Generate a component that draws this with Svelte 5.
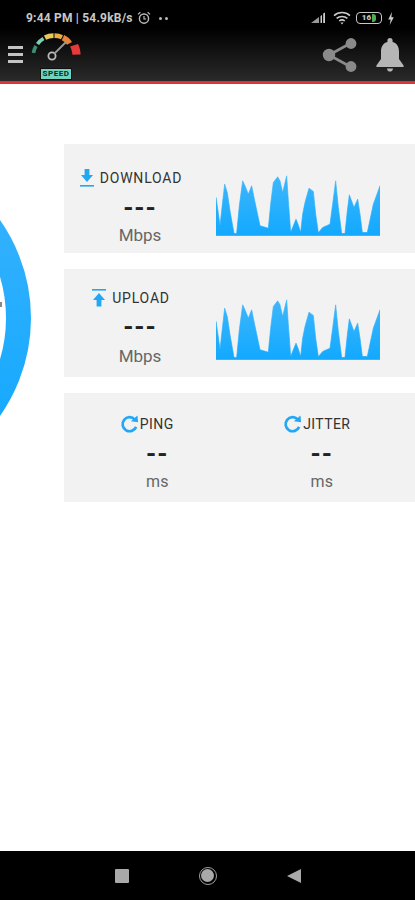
<script lang="ts">
	const chart =
		'M18 80L24 120L30 165L36 110L44 40L52 66L60 120L72 188L80 188L88 105L98 30L105 45L115 70L125 45L132 80L150 165L175 172L182 100L190 35L203 18L210 30L218 65L230 15L235 90L242 185L250 165L258 145L264 160L272 185L278 130L285 95L297 52L310 62L317 130L325 186L338 170L360 160L368 100L377 30L385 110L395 188L405 188L412 120L418 72L432 110L443 85L450 130L457 185L472 185L490 100L510 45L510 194L18 194Z';
	const pairs = [
		{ name: 'PING', unit: 'ms' },
		{ name: 'JITTER', unit: 'ms' }
	];
</script>

{#snippet graph(id)}
	<svg class="graph" viewBox="18 10 492 185" aria-hidden="true">
		<defs>
			<linearGradient {id} x1="0" y1="0" x2="0" y2="1">
				<stop offset="0" stop-color="#3fb6fb" />
				<stop offset="1" stop-color="#12a9ff" />
			</linearGradient>
		</defs>
		<path d={chart} fill="url(#{id})" stroke="url(#{id})" stroke-width="2" stroke-linejoin="round" />
	</svg>
{/snippet}

{#snippet reload()}
	<svg class="reload" viewBox="0 0 20 20" aria-hidden="true">
		<path d="M15.5 4.6A7.4 7.4 0 1 0 17 12.5" fill="none" stroke="#22a7f5" stroke-width="2.8" />
		<path d="M11.5 6.6L19 7.6L18.4 0.6Z" fill="#22a7f5" />
	</svg>
{/snippet}

<div class="page">
	<header class="top">
		<div class="status">
			<span class="status-text">9:44 PM | 54.9kB/s</span>
			<svg class="alarm" viewBox="0 0 14 14" aria-hidden="true">
				<circle cx="7" cy="7.6" r="4.6" fill="none" stroke="#bbb" stroke-width="1.4" />
				<path d="M7 5v3h2.2M1 3.4L3.4 1.2M13 3.4L10.6 1.2" fill="none" stroke="#bbb" stroke-width="1.2" />
			</svg>
			<span class="dots"><i></i><i></i></span>
			<span class="status-right">
				<svg class="signal" viewBox="0 0 16 12" aria-hidden="true">
					<path d="M1 11L9 5V11Z" fill="#999" />
					<path d="M10.5 4L12 3V11H10.5ZM13.2 1.6L15 0.6V11H13.2Z" fill="#ccc" />
				</svg>
				<svg class="wifi" viewBox="0 0 18 14" aria-hidden="true">
					<path d="M1 4.6C5.5 0.6 12.5 0.6 17 4.6M3.6 7.4C6.6 4.8 11.4 4.8 14.4 7.4M6.2 10C7.8 8.7 10.2 8.7 11.8 10" fill="none" stroke="#ccc" stroke-width="1.5" />
					<path d="M7.4 11.4L9 13.4L10.6 11.4Z" fill="#ccc" />
				</svg>
				<span class="battery"><b>16</b><i></i></span>
				<svg class="bolt" viewBox="0 0 8 14" aria-hidden="true">
					<path d="M5 0L1 8H3.6L2.6 14L7 5.6H4.4Z" fill="#ccc" />
				</svg>
			</span>
		</div>
		<div class="toolbar">
			<div class="burger"><i></i><i></i><i></i></div>
			<div class="logo">
				<svg viewBox="0 0 50 36" aria-hidden="true">
					<path d="M2.5 22C3 19 3.8 17 5 15" fill="none" stroke="#3b8f78" stroke-width="3.6" />
					<path d="M6.5 13C8 10.6 10 9 12.5 7.5" fill="none" stroke="#7fd0b0" stroke-width="3.6" />
					<path d="M14 6.6C17 5 20 4.6 22.5 4.6" fill="none" stroke="#e6c95a" stroke-width="4.6" />
					<path d="M23.5 4.6C26 4.6 29 5.2 31 6.2" fill="none" stroke="#e9ae45" stroke-width="4.6" />
					<path d="M32 6.6C35 8 37 9.6 38.5 12.4" fill="none" stroke="#e8833a" stroke-width="5.6" />
					<path d="M39 15.6L47 13C48.6 16 49.4 19.4 49.6 23.4L41.4 23.8C41.2 20.8 40.4 18 39 15.6Z" fill="#e53a3a" />
					<circle cx="21" cy="25" r="3.6" fill="none" stroke="#bbb" stroke-width="1.8" />
					<path d="M23 23L35 11" stroke="#999" stroke-width="1.8" />
				</svg>
				<span class="badge">SPEED</span>
			</div>
			<svg class="share" viewBox="0 0 36 36" aria-hidden="true">
				<path d="M7 18L29 6M7 18L29 30" stroke="#8a8a8a" stroke-width="2.6" />
				<circle cx="7" cy="18" r="6.2" fill="#8a8a8a" />
				<circle cx="29" cy="6.5" r="5.4" fill="#8a8a8a" />
				<circle cx="29" cy="29.5" r="5.4" fill="#8a8a8a" />
			</svg>
			<svg class="bell" viewBox="0 0 28 34" aria-hidden="true">
				<path d="M14 0C15.6 0 16.6 1 16.6 2.6V4C21 5.2 23 8.8 23 13.6V21L27.6 27.4V29H0.4V27.4L5 21V13.6C5 8.8 7 5.2 11.4 4V2.6C11.4 1 12.4 0 14 0Z" fill="#b5b5b5" />
				<path d="M11 30.5H17C17 32.4 15.6 33.6 14 33.6C12.4 33.6 11 32.4 11 30.5Z" fill="#b5b5b5" />
			</svg>
		</div>
	</header>

	<main class="content">
		<div class="gauge">
			<svg viewBox="0 0 64 220" aria-hidden="true">
				<defs>
					<linearGradient id="ring" x1="0" y1="0" x2="0" y2="1">
						<stop offset="0" stop-color="#3ab3fc" />
						<stop offset="1" stop-color="#0fa7ff" />
					</linearGradient>
				</defs>
				<circle cx="-139" cy="110" r="157.5" fill="none" stroke="url(#ring)" stroke-width="25" />
				<rect x="0" y="94" width="2" height="5" fill="#888" />
			</svg>
		</div>
		<div class="cards">
			<section class="card">
				<div class="reading">
					<div class="label">
						<svg class="arrow" viewBox="0 0 14 20" aria-hidden="true">
							<path d="M4.6 1H9.4V7H13L7 14L1 7H4.6Z" fill="#22a7f5" />
							<rect x="0" y="17" width="14" height="1.6" fill="#22a7f5" />
						</svg>
						DOWNLOAD
					</div>
					<div class="dash">---</div>
					<div class="unit">Mbps</div>
				</div>
				{@render graph('dl')}
			</section>
			<section class="card upload">
				<div class="reading">
					<div class="label">
						<svg class="arrow" viewBox="0 0 14 20" aria-hidden="true">
							<rect x="0" y="1" width="14" height="1.6" fill="#22a7f5" />
							<path d="M7 5L13 12H9.4V18.6H4.6V12H1Z" fill="#22a7f5" />
						</svg>
						UPLOAD
					</div>
					<div class="dash">---</div>
					<div class="unit">Mbps</div>
				</div>
				{@render graph('ul')}
			</section>
			<section class="card pair">
				{#each pairs as item}
					<div class="half">
						<div class="label thin">
							{@render reload()}
							{item.name}
						</div>
						<div class="dash">--</div>
						<div class="unit small">{item.unit}</div>
					</div>
				{/each}
			</section>
		</div>
	</main>

	<footer class="nav">
		<span class="square"></span>
		<span class="home"><i></i></span>
		<span class="back"></span>
	</footer>
</div>

<style>
	:global(body) {
		margin: 0;
		background: #fff;
	}

	.page {
		display: flex;
		flex-direction: column;
		height: 900px;
		overflow: hidden;
		font-family: Roboto, 'Liberation Sans', sans-serif;
	}

	.top {
		box-sizing: border-box;
		background: linear-gradient(#000 0, #000 28px, #2a2a2a 100%);
		border-bottom: 3px solid #e0323a;
		height: 84px;
		flex-shrink: 0;
	}

	.status {
		display: flex;
		align-items: center;
		height: 36px;
		padding: 0 0 0 26px;
		color: #c8c8c8;
		font-size: 12px;
		font-weight: 700;
	}

	.status-text {
		white-space: nowrap;
		letter-spacing: 0.2px;
	}

	.alarm {
		width: 14px;
		height: 14px;
		margin-left: 4px;
	}

	.dots {
		display: flex;
		gap: 3px;
		margin-left: 8px;
	}

	.dots i {
		width: 3px;
		height: 3px;
		background: #bbb;
		border-radius: 50%;
	}

	.status-right {
		display: flex;
		align-items: center;
		margin-left: auto;
		margin-right: 20px;
	}

	.signal {
		width: 16px;
		height: 12px;
	}

	.wifi {
		width: 18px;
		height: 14px;
		margin-left: 7px;
	}

	.battery {
		display: flex;
		align-items: center;
		justify-content: center;
		width: 24px;
		height: 10px;
		margin-left: 5px;
		border: 1.2px solid #c8c8c8;
		border-radius: 4px;
		font-size: 8px;
		line-height: 1;
	}

	.battery b {
		margin-right: 1px;
	}

	.battery i {
		width: 4px;
		height: 8px;
		background: #4caf50;
		border-radius: 0 3px 3px 0;
	}

	.bolt {
		width: 8px;
		height: 13px;
		margin-left: 5px;
	}

	.toolbar {
		display: flex;
		align-items: flex-start;
		height: 45px;
		padding-left: 8px;
	}

	.burger {
		display: flex;
		flex-direction: column;
		gap: 4px;
		width: 15px;
		margin-top: 10px;
	}

	.burger i {
		height: 3px;
		background: #c4c4c4;
	}

	.logo {
		display: flex;
		flex-direction: column;
		align-items: center;
		width: 50px;
		margin: -5px 0 0 8px;
	}

	.logo svg {
		width: 50px;
		height: 36px;
	}

	.badge {
		margin-top: 1px;
		padding: 0 2px;
		background: #6fd3bd;
		color: #0b2a24;
		border: 1px solid #111;
		font-size: 8px;
		font-weight: 700;
		line-height: 10px;
		letter-spacing: 0.5px;
	}

	.share {
		width: 36px;
		height: 36px;
		margin: 1px 0 0 auto;
	}

	.bell {
		width: 28px;
		height: 34px;
		margin: 2px 11px 0 18px;
	}

	.content {
		flex: 1;
		display: flex;
		min-height: 0;
	}

	.gauge {
		width: 64px;
		flex-shrink: 0;
		padding-top: 124px;
	}

	.gauge svg {
		display: block;
		width: 64px;
		height: 220px;
	}

	.cards {
		flex: 1;
		display: flex;
		flex-direction: column;
		gap: 16px;
		padding-top: 60px;
	}

	.card {
		display: flex;
		background: #f2f2f2;
		height: 109px;
		box-sizing: border-box;
		padding-right: 35px;
	}

	.upload {
		height: 108px;
	}

	.reading {
		width: 152px;
		flex-shrink: 0;
		padding-top: 24px;
		text-align: center;
	}

	.upload .reading {
		padding-top: 19px;
	}

	.label {
		display: flex;
		align-items: center;
		justify-content: center;
		height: 20px;
		gap: 6px;
		padding-right: 18px;
		color: #333;
		font-size: 14px;
		letter-spacing: 0.8px;
		white-space: nowrap;
	}

	.arrow {
		width: 14px;
		height: 20px;
	}

	.dash {
		height: 24px;
		margin-top: 8px;
		color: #222;
		font-size: 26px;
		font-weight: 700;
		line-height: 24px;
		letter-spacing: 1px;
	}

	.unit {
		margin-top: 4px;
		color: #666;
		font-size: 17px;
		line-height: 22px;
	}

	.upload .dash {
		margin-top: 7px;
	}

	.upload .unit {
		margin-top: 6px;
	}

	.graph {
		width: 164px;
		height: 62px;
		margin-top: 30px;
		flex-shrink: 0;
	}

	.upload .graph {
		margin-top: 29px;
	}

	.pair {
		padding: 21px 11px 0;
	}

	.half {
		flex: 1;
		text-align: center;
	}

	.thin {
		gap: 1px;
		padding-right: 21px;
		letter-spacing: 0.4px;
	}

	.half:last-child .thin {
		padding-right: 10px;
	}

	.reload {
		width: 19px;
		height: 19px;
	}

	.small {
		margin-top: 5px;
		font-size: 16px;
	}

	.nav {
		flex-shrink: 0;
		display: flex;
		align-items: center;
		justify-content: center;
		gap: 70px;
		height: 49px;
		background: #000;
	}

	.square {
		width: 14px;
		height: 14px;
		background: #a9a9a9;
		border-radius: 1px;
	}

	.home {
		display: flex;
		align-items: center;
		justify-content: center;
		width: 16px;
		height: 16px;
		border: 1px solid #a0a0a0;
		border-radius: 50%;
	}

	.home i {
		width: 13px;
		height: 13px;
		background: #a9a9a9;
		border-radius: 50%;
	}

	.back {
		width: 0;
		height: 0;
		border-style: solid;
		border-width: 7px 14px 7px 0;
		border-color: transparent #a9a9a9 transparent transparent;
	}
</style>
